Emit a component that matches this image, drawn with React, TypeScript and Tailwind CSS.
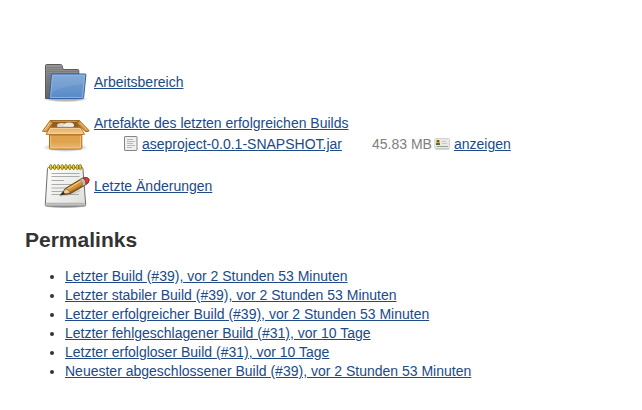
import React from "react";

const link = "text-[#204a87] underline whitespace-nowrap";

function FolderIcon() {
  return (
    <svg className="block h-12 w-12 shrink-0" viewBox="0 0 48 48">
      <defs>
        <linearGradient id="fb" x1="0" y1="0" x2="0" y2="1">
          <stop offset="0" stopColor="#969696" />
          <stop offset="1" stopColor="#646464" />
        </linearGradient>
        <linearGradient id="ff" x1="0" y1="0" x2="0" y2="1">
          <stop offset="0" stopColor="#7ba4d4" />
          <stop offset="1" stopColor="#588ac6" />
        </linearGradient>
        <radialGradient id="fs">
          <stop offset="0.6" stopColor="#000" stopOpacity="0.28" />
          <stop offset="1" stopColor="#000" stopOpacity="0" />
        </radialGradient>
      </defs>
      <ellipse cx="23.5" cy="41" rx="22.5" ry="3.2" fill="url(#fs)" />
      <path d="M3.5 40.5V7.5Q3.5 6.5 4.5 6.5H18.7Q19.7 6.5 20 7.5L21.2 11.5H35.8Q36.8 11.5 36.8 12.5V40.5Z" fill="url(#fb)" stroke="#5a5a5a" />
      <path d="M5 9.5H19M5 11.5H20M5 13.5H36M5 15.5H36M5 17.5H9M5 19.5H9M5 21.5H9M5 23.5H8.5M5 25.5H8.5M5 27.5H8M5 29.5H8M5 31.5H8" stroke="#555" strokeWidth="0.6" opacity="0.5" />
      <path d="M10.3 16H43.2Q44 16 43.9 16.8L41.6 39.6Q41.5 40.6 40.5 40.6H6.5Q7.5 40 7.6 38.5L9.5 16.8Q9.6 16 10.3 16Z" fill="url(#ff)" stroke="#2f61a2" />
      <path d="M10.6 17.2H42.6L40.5 39.5H8.6Z" fill="none" stroke="#a5c0e1" strokeWidth="0.7" />
      <path d="M11 17.5H42L41 26Q23 27 9.8 34Z" fill="#fff" opacity="0.08" />
    </svg>
  );
}

function PackageIcon() {
  return (
    <svg className="block h-12 w-12 shrink-0" viewBox="0 0 48 48">
      <defs>
        <linearGradient id="pb" x1="0" y1="0" x2="0" y2="1">
          <stop offset="0" stopColor="#dda14b" />
          <stop offset="0.6" stopColor="#dfa24e" />
          <stop offset="1" stopColor="#ecbd78" />
        </linearGradient>
        <linearGradient id="pf" x1="0" y1="0" x2="0" y2="1">
          <stop offset="0" stopColor="#e5ad62" />
          <stop offset="1" stopColor="#f3cb91" />
        </linearGradient>
        <radialGradient id="ps">
          <stop offset="0.5" stopColor="#000" stopOpacity="0.28" />
          <stop offset="1" stopColor="#000" stopOpacity="0" />
        </radialGradient>
      </defs>
      <ellipse cx="23.5" cy="36.5" rx="23" ry="4.5" fill="url(#ps)" />
      <path d="M8.3 9.5H37.3L39.5 21H6.5Z" fill="#a66a20" stroke="#a66b22" />
      <path d="M11 10.5H35L36.5 17H9.5Z" fill="#8e5e22" />
      <path d="M10.5 10.5H35" stroke="#d9a052" strokeWidth="0.8" />
      <ellipse cx="19.5" cy="14.8" rx="4.5" ry="2.7" fill="#dedbd4" />
      <ellipse cx="27" cy="14.3" rx="5" ry="2.7" fill="#edebe7" />
      <rect x="7.5" y="20" width="32.3" height="18" rx="1.2" fill="url(#pb)" stroke="#ae6c13" />
      <path d="M8.7 24H38.6V36.9H8.7Z" fill="none" stroke="#f1c98e" strokeWidth="0.8" />
      <path d="M8.3 24.3H39" stroke="#a2610d" strokeWidth="1" opacity="0.6" />
      <path d="M8.3 9.5L.8 19.8Q.3 20.7 1.3 20.6H4.5L10.7 12.2Z" fill="#e0a555" stroke="#a96b1a" />
      <path d="M8 11.5L2.5 19.3" stroke="#f3d09a" strokeWidth="0.8" />
      <path d="M37.3 9.5L46.7 19.2Q47.2 20.4 46 20.4H43L35.3 12.2Z" fill="#d49443" stroke="#a96b1a" />
      <path d="M38 11.5L45.3 19.2" stroke="#f3d09a" strokeWidth="0.8" />
      <path d="M7.7 16.4H38.5L42.5 23.4H4.2Z" fill="url(#pf)" stroke="#b37527" />
      <path d="M8.3 17.5H38L40.8 22.4H6.1Z" fill="none" stroke="#f9d9a7" strokeWidth="0.7" />
    </svg>
  );
}

function NotepadIcon() {
  return (
    <svg className="block h-12 w-12 shrink-0" viewBox="0 0 48 48">
      <defs>
        <linearGradient id="np" x1="0" y1="0" x2="1" y2="1">
          <stop offset="0" stopColor="#fff" />
          <stop offset="1" stopColor="#dededc" />
        </linearGradient>
        <radialGradient id="ns">
          <stop offset="0.5" stopColor="#000" stopOpacity="0.35" />
          <stop offset="1" stopColor="#000" stopOpacity="0" />
        </radialGradient>
      </defs>
      <ellipse cx="23" cy="44" rx="22" ry="2.6" fill="url(#ns)" />
      <path d="M6.5 5.5H40Q40.8 5.5 40.9 6.5L43.7 42.5Q43.7 44 42.2 44H4.8Q3.2 44 3.3 42.5L5.5 6.5Q5.6 5.5 6.5 5.5Z" fill="url(#np)" stroke="#6e6e6e" />
      <path d="M4.3 41.8H42.7" stroke="#b4b4b2" strokeWidth="2" />
      <path d="M9.5 11.5H37.5M9.5 14.5H37.5M9.5 18.5H22M9.5 22.5H37.5M9.5 26H30M9.5 29.5H21M9.5 32.5H37" stroke="#a3a3a1" strokeWidth="0.9" />
      {[8.8, 12.6, 16.4, 20.2, 24, 27.8, 31.6, 35.4, 38.3].map((x) => (
        <g key={x}>
          <ellipse cx={x} cy="5.1" rx="1.3" ry="2.6" fill="#e3c21b" stroke="#7b6807" strokeWidth="0.8" />
          <path d={`M${x - 0.3} 3.4V6.4`} stroke="#f9e44e" strokeWidth="0.6" />
        </g>
      ))}
      <path d="M18 33.5Q29 33 38 28" fill="none" stroke="#777" strokeWidth="2.5" opacity="0.25" />
      <path d="M18.8 32.8L23.8 26.3L40.4 16.3Q44.8 14.4 46.8 17.2Q47.8 19.9 43.8 22.6L28.2 31.4Z" fill="#cf9138" stroke="#654216" strokeWidth="1.1" />
      <path d="M25 27.4L40.5 18" stroke="#f1bd6b" strokeWidth="1.6" />
      <path d="M28 30.2L42.7 22" stroke="#a5651a" strokeWidth="1.3" />
      <path d="M19.1 32.5L23.8 26.7Q27.5 27.4 28 31Z" fill="#ebcc97" stroke="#765a35" strokeWidth="0.7" />
      <path d="M18.5 33L21.3 29.8L23 32.1Z" fill="#222" />
      <path d="M38.2 17.8L41 16.1Q44.2 18.5 43.7 22.5L40.8 24.1Q41 20.4 38.2 17.8Z" fill="#bcbcb8" stroke="#777" strokeWidth="0.5" />
      <path d="M41.5 15.9Q45.4 14.6 46.8 17.2Q47.6 20 44.1 22.2Q44.2 18.4 41.5 15.9Z" fill="#e13b32" stroke="#96231c" strokeWidth="0.7" />
    </svg>
  );
}

function TextIcon() {
  return (
    <svg className="block h-4 w-4 shrink-0" viewBox="0 0 16 16">
      <rect x="1.5" y="1.5" width="12.5" height="14" rx="0.5" fill="#efefef" stroke="#858585" />
      <path d="M4 4.5H10M4 6.5H12M4 8.5H10M4 10.5H12M4 12.5H9" stroke="#b9b9b9" />
    </svg>
  );
}

function FingerprintIcon() {
  return (
    <svg className="block h-4 w-4 shrink-0" viewBox="0 0 16 16">
      <rect x="0.8" y="3.5" width="14.7" height="10.3" rx="1" fill="#e9e9e7" stroke="#d2d2d0" />
      <path d="M1.5 14H15" stroke="#b8b8b5" />
      <rect x="2" y="5" width="4" height="5" fill="#ceb36c" />
      <rect x="3" y="5" width="2" height="2" fill="#795526" />
      <path d="M2 10V8.5Q4 7 6 8.5V10Z" fill="#4a7424" />
      <path d="M8 6.5H12M8 8.5H13" stroke="#bdbdbb" strokeWidth="0.8" />
      <path d="M2.5 11.5H14" stroke="#888" strokeWidth="0.8" />
    </svg>
  );
}

const permalinks = [
  "Letzter Build (#39), vor 2 Stunden 53 Minuten",
  "Letzter stabiler Build (#39), vor 2 Stunden 53 Minuten",
  "Letzter erfolgreicher Build (#39), vor 2 Stunden 53 Minuten",
  "Letzter fehlgeschlagener Build (#31), vor 10 Tage",
  "Letzter erfolgloser Build (#31), vor 10 Tage",
  "Neuester abgeschlossener Build (#39), vor 2 Stunden 53 Minuten",
];

export default function App() {
  return (
    <main className="h-[410px] w-[642px] overflow-hidden bg-white pt-[58px] font-['Liberation_Sans',Arial,sans-serif] text-[14px] leading-[19px] text-[#333]">
      <section className="flex flex-col gap-1 pl-[42px]">
        <div className="flex h-12 items-center gap-1">
          <FolderIcon />
          <a className={link}>Arbeitsbereich</a>
        </div>
        <div className="flex h-12 gap-1 pt-px">
          <PackageIcon />
          <div className="flex flex-col pt-[3px]">
            <a className={`${link} h-[21px]`}>Artefakte des letzten erfolgreichen Builds</a>
            <div className="flex pl-[29px]">
              <TextIcon />
              <a className={`${link} ml-[3px] w-[230px]`}>aseproject-0.0.1-SNAPSHOT.jar</a>
              <span className="w-[62px] whitespace-nowrap text-[#808080]">45.83 MB</span>
              <FingerprintIcon />
              <a className={`${link} ml-1`}>anzeigen</a>
            </div>
          </div>
        </div>
        <div className="flex h-12 items-center gap-1">
          <NotepadIcon />
          <a className={link}>Letzte Änderungen</a>
        </div>
      </section>
      <h2 className="mt-[17px] pl-[25px] text-[21px] leading-[26px] font-bold">Permalinks</h2>
      <ul className="mt-[14px] list-disc pl-[65px]">
        {permalinks.map((label) => (
          <li key={label}>
            <a className={link}>{label}</a>
          </li>
        ))}
      </ul>
    </main>
  );
}
